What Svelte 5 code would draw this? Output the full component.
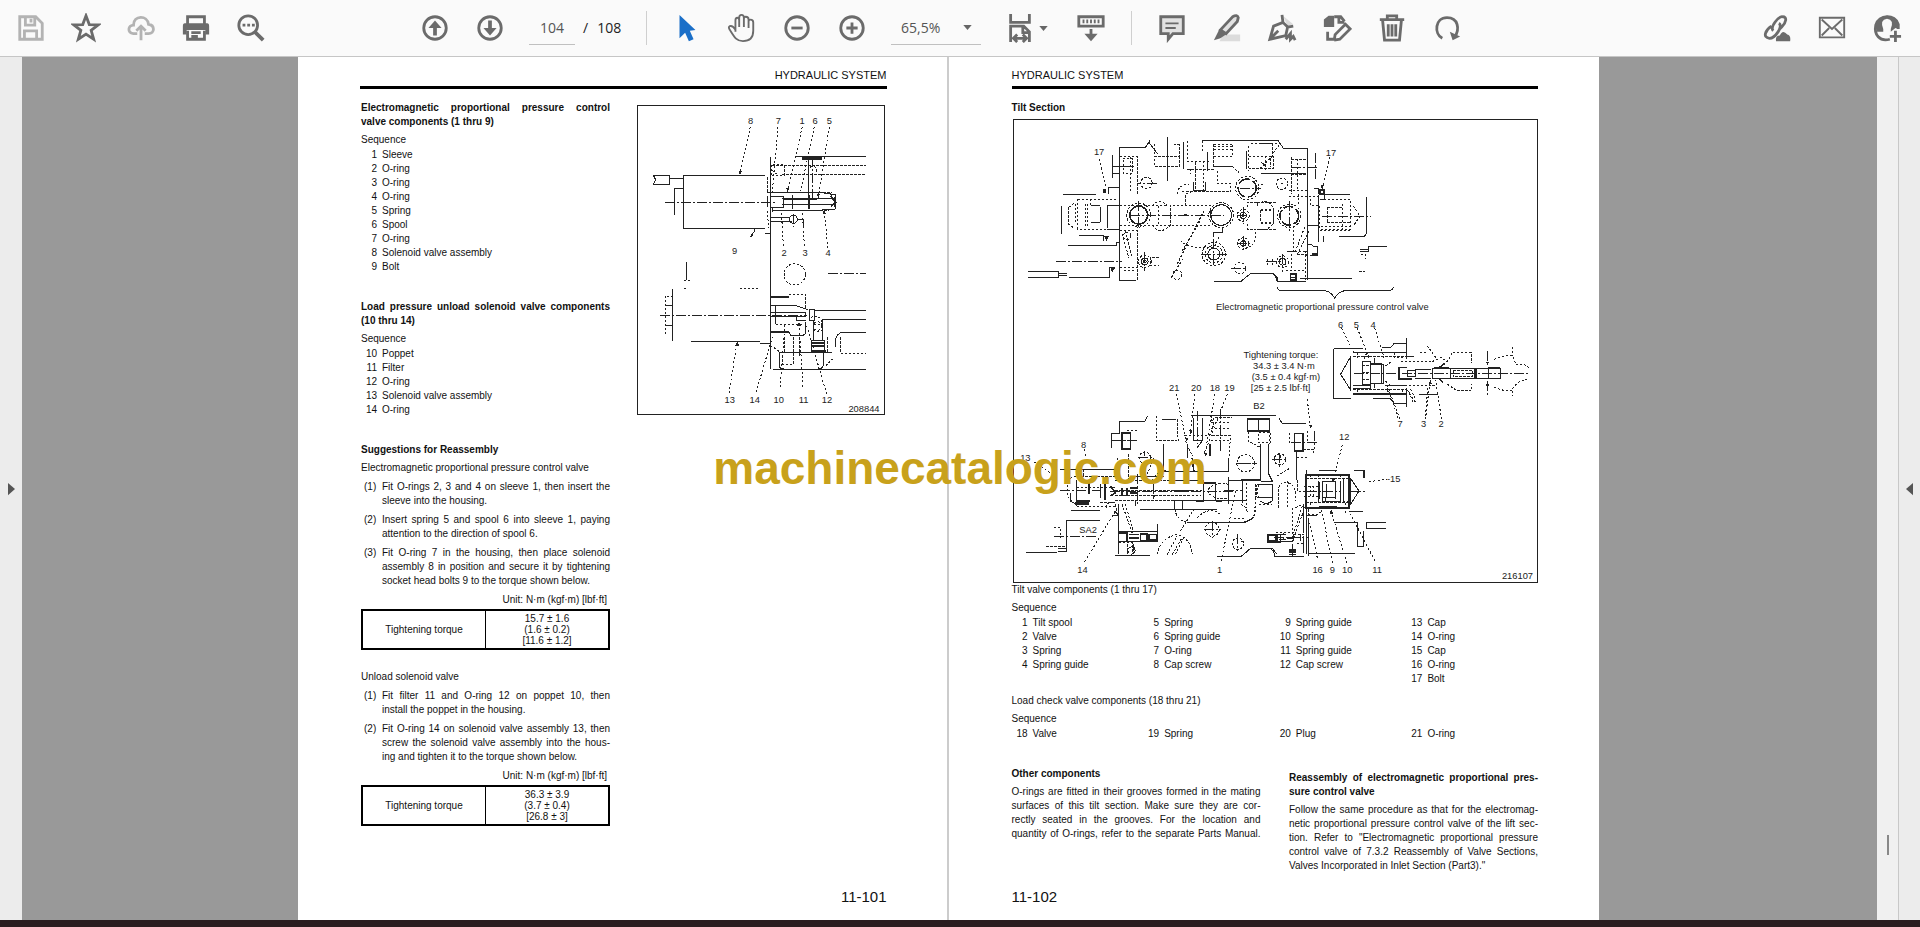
<script>
	let pageNumber = "104";
	let zoom = "65,5%";

	const leftParts = [
		{ no: 1, name: "Sleeve" },
		{ no: 2, name: "O-ring" },
		{ no: 3, name: "O-ring" },
		{ no: 4, name: "O-ring" },
		{ no: 5, name: "Spring" },
		{ no: 6, name: "Spool" },
		{ no: 7, name: "O-ring" },
		{ no: 8, name: "Solenoid valve assembly" },
		{ no: 9, name: "Bolt" },
	];

	const unloadParts = [
		{ no: 10, name: "Poppet" },
		{ no: 11, name: "Filter" },
		{ no: 12, name: "O-ring" },
		{ no: 13, name: "Solenoid valve assembly" },
		{ no: 14, name: "O-ring" },
	];

	const tiltParts = [
		[
			{ no: 1, name: "Tilt spool" },
			{ no: 2, name: "Valve" },
			{ no: 3, name: "Spring" },
			{ no: 4, name: "Spring guide" },
		],
		[
			{ no: 5, name: "Spring" },
			{ no: 6, name: "Spring guide" },
			{ no: 7, name: "O-ring" },
			{ no: 8, name: "Cap screw" },
		],
		[
			{ no: 9, name: "Spring guide" },
			{ no: 10, name: "Spring" },
			{ no: 11, name: "Spring guide" },
			{ no: 12, name: "Cap screw" },
		],
		[
			{ no: 13, name: "Cap" },
			{ no: 14, name: "O-ring" },
			{ no: 15, name: "Cap" },
			{ no: 16, name: "O-ring" },
			{ no: 17, name: "Bolt" },
		],
	];

	const checkParts = [
		[{ no: 18, name: "Valve" }],
		[{ no: 19, name: "Spring" }],
		[{ no: 20, name: "Plug" }],
		[{ no: 21, name: "O-ring" }],
	];

	const valveSteps = [
		["Fit O-rings 2, 3 and 4 on sleeve 1, then insert the", "sleeve into the housing."],
		["Insert spring 5 and spool 6 into sleeve 1, paying", "attention to the direction of spool 6."],
		[
			"Fit O-ring 7 in the housing, then place solenoid",
			"assembly 8 in position and secure it by tightening",
			"socket head bolts 9 to the torque shown below.",
		],
	];

	const unloadSteps = [
		["Fit filter 11 and O-ring 12 on poppet 10, then", "install the poppet in the housing."],
		[
			"Fit O-ring 14 on solenoid valve assembly 13, then",
			"screw the solenoid valve assembly into the hous-",
			"ing and tighten it to the torque shown below.",
		],
	];

	const otherText = [
		"O-rings are fitted in their grooves formed in the mating",
		"surfaces of this tilt section. Make sure they are cor-",
		"rectly seated in the grooves. For the location and",
		"quantity of O-rings, refer to the separate Parts Manual.",
	];

	const reassemblyText = [
		"Follow the same procedure as that for the electromag-",
		"netic proportional pressure control valve of the lift sec-",
		'tion. Refer to "Electromagnetic proportional pressure',
		"control valve of 7.3.2 Reassembly of Valve Sections,",
		'Valves Incorporated in Inlet Section (Part3)."',
	];
</script>

{#snippet parts(items)}
	<ul class="parts">
		{#each items as part}
			<li><span class="no">{part.no}</span>{part.name}</li>
		{/each}
	</ul>
{/snippet}

{#snippet lines(items)}
	{#each items as line}
		<span class="line">{line}</span>
	{/each}
{/snippet}

{#snippet steps(items)}
	<ul class="steps">
		{#each items as step, i}
			<li>
				<span class="step-no">({i + 1})</span>
				<div class="step-text">{@render lines(step)}</div>
			</li>
		{/each}
	</ul>
{/snippet}

{#snippet torque(values)}
	<p class="unit">Unit: N·m (kgf·m) [lbf·ft]</p>
	<table>
		<tbody>
			<tr>
				<th scope="row">Tightening torque</th>
				<td>{#each values as value}<span class="value">{value}</span>{/each}</td>
			</tr>
		</tbody>
	</table>
{/snippet}

<div class="viewer">
	<header class="toolbar">
		<div class="group">
			<button class="faded" aria-label="Save">
				<svg viewBox="0 0 32 32"><path d="M4 4H21L28 11V28H4Z" /><path d="M10 4V13H20V4M16 6V10M9 28V19H22V28" /></svg>
			</button>
			<button aria-label="Star">
				<svg viewBox="0 0 32 32"><path d="M16 3L19.500 12.300L29 12.600L21.500 18.500L24.200 28L16 22.500L7.800 28L10.500 18.500L3 12.600L12.500 12.300Z" /></svg>
			</button>
			<button class="faded" aria-label="Upload">
				<svg viewBox="0 0 32 32"><path d="M12 22H8C1 21 2 13 8 13C8 2 23 2 24 12C31 13 31 22 24 22H20M16 29V15M11 19L16 14L21 19" /></svg>
			</button>
			<button aria-label="Print">
				<svg viewBox="0 0 32 32">
					<path class="fill" d="M4 11H28Q30 11 30 14V23H26V18H6V23H2V14Q2 11 4 11Z" />
					<path d="M7 12V4H25V12M7 19V28H25V19M11 21H21M11 25H18" />
				</svg>
			</button>
			<button aria-label="Search">
				<svg viewBox="0 0 32 32"><circle cx="13" cy="13" r="10" /><path d="M20 20L29 29" stroke-width="4" /><path d="M7 13H10M12 13H15M17 13H20" /></svg>
			</button>
		</div>

		<div class="group middle">
			<button aria-label="Previous page">
				<svg viewBox="0 0 32 32"><circle cx="16" cy="16" r="12" /><path d="M16 24V12" stroke-width="4" /><path class="fill" d="M9 16L16 8L23 16Z" /></svg>
			</button>
			<button aria-label="Next page">
				<svg viewBox="0 0 32 32"><circle cx="16" cy="16" r="12" /><path d="M16 8V20" stroke-width="4" /><path class="fill" d="M9 16L16 24L23 16Z" /></svg>
			</button>
			<input class="page-input" aria-label="Page number" bind:value={pageNumber} />
			<span class="total"><span>/</span><span>108</span></span>
			<span class="divider"></span>
			<button aria-label="Select">
				<svg viewBox="0 0 32 32"><path class="blue" d="M8 2L25 18L19 19L23 28L18 30L14 21L8 27Z" /></svg>
			</button>
			<button aria-label="Hand">
				<svg viewBox="0 0 32 32"><path d="M9 20V8Q9 5 11 5Q13 5 13 8V15V5Q13 2 15.500 2Q18 2 18 5V15V6Q18 4 20 4Q23 4 23 7V16V9Q23 7 25 7Q28 7 28 10V19C28 27 23 30 17 30C10 30 8 26 3 18Q1 15 3 14Q6 13 9 18" stroke-width="2" /></svg>
			</button>
			<button aria-label="Zoom out">
				<svg viewBox="0 0 32 32"><circle cx="16" cy="16" r="12" /><path d="M10 16H22" /></svg>
			</button>
			<button aria-label="Zoom in">
				<svg viewBox="0 0 32 32"><circle cx="16" cy="16" r="12" /><path d="M10 16H22M16 10V22" /></svg>
			</button>
			<label class="zoom">
				<select aria-label="Zoom level" bind:value={zoom}>
					<option>65,5%</option>
					<option>100%</option>
				</select>
				<svg class="caret" viewBox="0 0 10 6"><path d="M0 0H10L5 6Z" /></svg>
			</label>
			<button class="fit" aria-label="Fit width">
				<svg viewBox="0 0 32 32"><path d="M6 1V10H26V1M6 31V14H20L26 20V31M19 14V21H26M9 27H23M13 23L9 27L13 31M19 23L23 27L19 31" /></svg>
				<svg class="caret" viewBox="0 0 10 6"><path d="M0 0H10L5 6Z" /></svg>
			</button>
			<button aria-label="Scroll mode">
				<svg viewBox="0 0 32 32"><path d="M3 4H29V14H3ZM16 17V27" /><path d="M7 9H25" stroke-width="4" stroke-dasharray="2 2" /><path class="fill" d="M9 22H23L16 30Z" /></svg>
			</button>
			<span class="divider close"></span>
			<button aria-label="Comment">
				<svg viewBox="0 0 32 32"><path class="pale" d="M4 4H28V22H17L12 28V22H4Z" /><path d="M9 11H23M9 16H20" stroke-width="2" /></svg>
			</button>
			<button aria-label="Highlight">
				<svg viewBox="0 0 32 32"><path class="shade" d="M12 23H30V30H8Z" /><path class="pale" d="M9 18L22 4Q27 1 28 5L27 9L15 22Z" /><path class="fill" d="M8 17L16 22L9 27L2 29Z" /></svg>
			</button>
			<button aria-label="Sign">
				<svg viewBox="0 0 32 32"><path class="shade" d="M17 3L28 12L22 14Z" /><path d="M17 10L22 15L20 24L3 28L7 14ZM4 27L12 19M16 2L17 10M22 15L28 14M20 28L25 22V28L28 25L30 29" /></svg>
			</button>
			<button aria-label="Stamp">
				<svg viewBox="0 0 32 32"><path class="fill" d="M2 7L7 3H13V15H2Z" /><path d="M13 4H20L24 9M18 4V10H24M6 20V28H13M13 29L14 23L25 12L30 17L19 28L13 29" /></svg>
			</button>
			<button aria-label="Delete">
				<svg viewBox="0 0 32 32"><path d="M3 7H29M11 6V3H21V6M6 8L8 29H24L26 8M12 12V25M16 12V25M20 12V25" /></svg>
			</button>
			<button aria-label="Rotate">
				<svg viewBox="0 0 32 32"><path d="M11 27C2 22 3 5 16 5C28 5 30 17 24 26" /><path class="fill" d="M19 20L22 29L30 25Z" /></svg>
			</button>
		</div>

		<div class="group right">
			<button aria-label="Share link">
				<svg viewBox="0 0 32 32"><path d="M12 19C8 15 18 3 22 4C27 4 26 10 21 15L18 18M18 11C23 14 14 27 8 27C0 26 4 18 10 14" /><path class="fill" d="M15 30Q14 24 19 24Q22 17 27 23Q31 24 30 30Z" /></svg>
			</button>
			<button aria-label="Send mail">
				<svg viewBox="0 0 32 32"><path d="M3 5H29V26H3ZM5 7L16 17L27 7M5 24L13 16M27 24L19 16" stroke-width="2" /></svg>
			</button>
			<button aria-label="Add user">
				<svg viewBox="0 0 32 32"><path d="M19 28C8 31 2 23 4 13C7 1 25 1 28 12V17" /><path class="fill" d="M5 20L12 20V17Q8 7 16 6Q24 7 20 17V20L25 16L28 17V10Q24 3 16 3Q5 4 4 15Z" /><path d="M25 19V31M19 25H31" /></svg>
			</button>
		</div>
	</header>

	<div class="work">
		<button class="pane" aria-label="Open navigation pane">
			<svg class="pane-arrow" viewBox="0 0 8 14"><path d="M0 0L8 7L0 14Z" /></svg>
		</button>

		<main>
			<div class="spread">
				<article class="page odd">
					<p class="running">HYDRAULIC SYSTEM</p>
					<div class="cols">
						<div class="col">
							<h2>
								<span class="line">Electromagnetic proportional pressure control</span>
								<span class="line">valve components (1 thru 9)</span>
							</h2>
							<p class="sequence">Sequence</p>
							{@render parts(leftParts)}

							<h2 class="next">
								<span class="line">Load pressure unload solenoid valve components</span>
								<span class="line">(10 thru 14)</span>
							</h2>
							<p class="sequence">Sequence</p>
							{@render parts(unloadParts)}

							<h2 class="next">Suggestions for Reassembly</h2>
							<p class="intro">Electromagnetic proportional pressure control valve</p>
							{@render steps(valveSteps)}
							{@render torque(["15.7 ± 1.6", "(1.6 ± 0.2)", "[11.6 ± 1.2]"])}

							<p class="unload">Unload solenoid valve</p>
							{@render steps(unloadSteps)}
							{@render torque(["36.3 ± 3.9", "(3.7 ± 0.4)", "[26.8 ± 3]"])}
						</div>

						<figure class="small">
							<svg class="drawing" viewBox="37 136 738 924" role="img" aria-label="Solenoid valves">
								<!-- housing and solenoids -->
								<path d="M433 288V926M417 343H172V503H417M83 343H131V371H83L90 358L83 343M131 352H172M172 382H146V464M512 287H722M548 287V404M386 503V512L374 528M418 517H433M181 603V658M140 685V842M195 842H402M403 847H433M118 733H140M118 794H140M566 748H722M590 775H722M590 775V838M563 780V838M442 925H722M460 875H620M460 875V915Q462 925 475 925M628 860V845Q632 815 655 814H722M592 875V915Q590 925 578 925" />
								<path d="M433 395H580L628 402V445L575 449H440M470 412H628M470 432H628M433 407H472V440H433ZM425 405V440M433 483H500M433 471H492M515 476H533V500M433 733H505L548 747M433 754H540V768H433M512 768V780H540M551 745H566V778H551ZM450 735V790M433 815H490L495 825H530L538 820V785M557 838H596V875H557Z" />
								<path class="thick" d="M528 291H590M528 294H590M475 414H575M475 431H575M500 404V444M550 404V444M578 395V410M628 408V440M557 846H596M560 856H594M557 870H600M435 709H490M435 813H490M615 405L630 425L615 438M440 440V455" />
								<path class="dash" d="M440 314H722M470 341H722M436 312V345H475V312ZM553 320Q570 310 572 330V338M424 350V395M440 330L460 345M424 450L430 503M175 682H182M175 658H200M342 682H402M118 820V706H140M490 700H540V745M450 790H530M503 830V910H470V880M520 830V890M645 830V877H722M475 830V875M565 790H588M433 858Q455 862 460 875M600 915L620 895M425 395H620M440 450H610M555 770Q588 760 590 790M563 808Q576 820 590 808M605 830V875" />
								<path class="center" d="M117 424H455M102 763H545M606 639H722M560 290V415M503 460V500" />
								<circle class="dash" cx="507" cy="641" r="32" /><circle cx="503" cy="476" r="12" /><circle class="dash" cx="576" cy="796" r="13" />
								<path class="lead" d="M374 198L343 340M457 198L440 395M530 198L485 392M566 198L525 390M611 198L578 408M473 555L467 450M536 555L530 450M607 562L595 450M310 998L334 845M391 995L440 830M463 980L478 785M532 978L520 790M603 1000L540 785" />
								<path class="arrow" d="M338 330H350L343 343ZM482 382H492L485 395ZM590 460H602L595 448ZM329 855H340L335 842ZM370 530L382 518V527ZM573 400H583L578 412ZM515 795H525L520 785Z" />
								<text x="375" y="189">8</text><text x="458" y="189">7</text><text x="529" y="189">1</text><text x="568" y="189">6</text><text x="611" y="189">5</text>
								<text x="327" y="580">9</text><text x="475" y="585">2</text><text x="538" y="585">3</text><text x="607" y="585">4</text>
								<text x="312" y="1026">13</text><text x="387" y="1026">14</text><text x="459" y="1026">10</text><text x="534" y="1026">11</text><text x="604" y="1026">12</text>
								<text x="715" y="1053">208844</text>
							</svg>
						</figure>
					</div>
					<p class="folio">11-101</p>
				</article>

				<article class="page even">
					<p class="running">HYDRAULIC SYSTEM</p>
					<h2>Tilt Section</h2>
					<figure>
						<svg class="drawing" viewBox="41 88 1569 1386" role="img" aria-label="Tilt section valves">
							<!-- upper valve, left half -->
							<path d="M358 170H435L448 150M358 170V568H408M445 155L472 190M500 138V245M550 155V235M605 149H835M620 185V240M335 193V262M335 227H400M335 247H358M188 310H288M325 310V290H358M320 343H358M320 415H358M182 345V430M235 433H308V450M202 463H348V455H358M82 541H175V559H82M175 547H200M175 553H200M205 559H328V530H345M640 571H722L750 548H815L830 560V571M737 180V235M780 247H835M578 275V300H615V275M640 440V425H665V408M320 345V412M300 348V395M272 345H300M272 395H300M783 215L797 228" />
							<path class="dash" d="M463 160V197H538V160M463 205V227H538V197M538 160H520M560 150V212H625M605 150V180M640 160H697V197H640ZM640 168H697M640 176H697M640 227H700M640 197V227H695L715 245M750 157H840L815 190M745 165V240M745 197H820V232H745M560 235H640M585 215V300H610V215M570 235V250M530 310Q532 282 565 280M650 240V278H690M545 303H690V280M555 345V315Q560 303 580 303M358 198H410V310M390 198V305M368 203H395V248H368ZM358 343H500M358 403H630M475 345V403M455 345Q475 320 500 345M455 403Q480 435 510 403V343H630M232 325H350M232 325V415H350M270 325V345M225 340V400M205 350V400L225 415M205 350L225 335M255 340V405M262 340V405M540 450Q560 470 600 470H640L655 440M545 480L600 390M570 440L610 360M530 520L560 460M512 560L550 500M358 420H410V568M375 420L395 500M365 430L385 500M358 530H410M370 540H405M475 500H450V525H475M740 350V335H770V350M740 400V415H765V440Q760 470 735 470M780 360H820V395H780ZM770 335H830M770 415H830" />
							<circle class="thick" cx="415" cy="373" r="27" /><circle class="dash" cx="415" cy="373" r="36" />
							<circle cx="662" cy="373" r="31" /><circle class="dash" cx="662" cy="373" r="37" />
							<circle class="thick" cx="740" cy="292" r="27" stroke-dasharray="40 8" /><circle class="dash" cx="740" cy="292" r="35" />
							<circle cx="728" cy="374" r="9" /><circle class="dash" cx="728" cy="374" r="18" /><circle cx="728" cy="458" r="8" /><circle class="dash" cx="728" cy="458" r="17" />
							<circle cx="640" cy="490" r="18" /><circle class="dash" cx="640" cy="490" r="26" /><circle class="dash" cx="640" cy="490" r="35" />
							<circle class="dash" cx="718" cy="532" r="17" /><circle class="dash" cx="438" cy="277" r="17" /><circle cx="433" cy="512" r="10" /><circle class="dash" cx="433" cy="512" r="19" /><circle cx="380" cy="435" r="11" class="dash" /><circle class="dash" cx="530" cy="552" r="14" />
							<circle cx="728" cy="374" r="3" /><circle cx="433" cy="512" r="4" />
							<path class="center" d="M168 511H365M390 373H670M415 330V415M470 277H410M640 445V525M600 490H680M692 532H735M728 350V400M708 374H748M708 458H748M728 435V478M433 485V540M500 245V270M630 352V395M797 512H840M718 292H782" />
							<path class="arrow" d="M308 295H318V308H308ZM310 436H325L318 450ZM330 530H345L335 545ZM550 369H560V377H550Z" />
							<path class="lead" d="M297 205L317 292" />
							<text x="296" y="194">17</text>

							<!-- upper valve, right half -->
							<g transform="translate(780 0)">
								<path d="M20 149H52L68 172H142V568M0 247H135M142 405H175V312M182 312H268M175 325V455M192 312V325H178M0 548H40L50 571H137M316 320V430L312 436H235M380 466H322V485M298 475H322M298 482H322M142 460H152L158 466H170V495M190 435V455M118 562H273M160 293H175V310M50 590Q52 600 70 600H195Q212 604 222 622Q232 604 250 600H380Q396 600 398 588" />
								<path class="dash" d="M0 157H35V197L0 232M15 195V240M0 197H30V230M92 200V310M110 205V300M92 205H135M92 250H135M85 300H142M85 318H175M115 310V345M178 325H275M178 345V415H270V325M200 350V395M245 340V415M200 350H245M200 395H270M278 345L298 377L278 405M180 408H275M178 418H270M0 335Q25 325 40 355V395Q25 420 0 415M0 355H40M0 397H40M100 405V490M132 410L105 480M145 420L110 490M110 490H140M92 490V540M135 480V568M20 505V522M35 505V522M0 280H10M75 540H135V560M300 492H315V505M296 541H312M150 325V345H175M155 495H135" />
								<path class="thick" d="M88 550H108M88 560H108M88 568H108M90 550V570M106 550V570M178 298H190V310H178Z" />
								<circle class="thick" cx="86" cy="375" r="28" stroke-dasharray="30 8" /><circle class="dash" cx="86" cy="375" r="35" /><circle class="dash" cx="64" cy="279" r="17" /><circle cx="66" cy="513" r="10" /><circle class="dash" cx="66" cy="513" r="18" />
								<path class="center" d="M86 330V420M183 376H330M92 230H175M166 188V270M66 490V545M20 513H60M78 482H140M60 279H68" />
								<path class="lead" d="M208 200L184 296" /><path class="arrow" d="M180 284H190L184 296ZM153 486H168V495H153Z" />
								<text x="211" y="195">17</text>

								<!-- enlarged cartridge -->
								<path d="M306 772H222L218 776V922H272M365 770H390L400 758H437M437 742V805M437 890V947M278 785H437M278 910H437M240 850L270 797M240 850L270 897V797M278 885H330V892H278M305 812H328V880H305M328 820H368V878H328V820M340 800V820M340 878V890M372 885H437M305 812V880M337 924H390L400 937H437M412 830H440M440 840H463V857H440ZM412 865H440M463 835H510M463 862H510M515 832H640V862H515ZM568 832V862M640 832H718V862H640M683 832V862M475 910H533M460 797H437" />
								<path class="thick" d="M278 785H437M278 909H437M362 822V876M414 830V865M330 820H365M332 878H340M645 832V862M682 832H718M520 832H565M415 830H432M415 865H455M535 830L552 818M535 863L548 875" />
								<path class="dash" d="M278 797H437M290 785V800M310 803Q318 775 328 803M400 785V800H430M278 897H437M292 897V908M380 897V908M425 897V908M305 825H328M305 845H328M305 865H328M375 825L395 810M375 870L390 885M420 812H515M420 885H515M440 897L465 935M450 895L465 925M445 905L460 940M500 765L525 800M478 785H500M515 812L540 800L560 812L575 785H632V815M560 880L590 900H632V878M700 805L735 795H755L765 820H790L805 830M700 890L735 900H750L770 875L805 862M755 768V795M755 900V915M515 885L530 880M578 838H635V857H578Z" />
								<path class="center" d="M280 847H808M680 780V820M680 870V915" />
								<path class="lead" d="M243 712L280 785M290 712L325 800M342 712L370 800M418 985L375 870M495 985L508 866M542 985L525 866" />
								<path class="arrow" d="M675 812H686L680 824ZM675 884H686L680 872ZM504 880H514L509 866Z" />
								<text x="240" y="710">6</text><text x="287" y="710">5</text><text x="337" y="710">4</text>
								<text x="418" y="1009">7</text><text x="489" y="1009">3</text><text x="541" y="1009">2</text>
							</g>
							<text x="965" y="657">Electromagnetic proportional pressure control valve</text>
							<text x="841" y="801">Tightening torque:</text>
							<text x="850" y="834">34.3 ± 3.4 N·m</text>
							<text x="856" y="867">(3.5 ± 0.4 kgf·m)</text>
							<text x="840" y="900">[25 ± 2.5 lbf·ft]</text>

							<!-- lower valve, left half -->
							<g transform="translate(0 750)">
								<path d="M357 243H432L442 225M357 243V278H332V320M365 275H390V325H365ZM485 235H527M570 223H827M490 310V392H685V350M580 230V300H607V230M605 300L590 320M178 385H350V375M210 455V480L230 492M212 508H298M197 632V538H298M197 622H172M197 630H172M78 634H170M312 418V478M353 490V640M353 572H470V600H353M470 550V600M345 642H450M400 405H490M512 478H685M405 495V478M420 505H648M523 480V505M547 480V505M610 418V480M645 430V478M685 408V488M725 430V485M685 418H780M685 478H737M742 233H808V270H742M780 310V418M805 310V400L815 420M775 430H815V470H775M560 543H735L760 530M650 646H722L750 622H815L830 640M665 480H645M512 418H610M800 580H840V605H800Z" />
								<path class="thick" d="M365 276H390V324H365ZM742 236H808M314 418V478M228 480H270M228 480V418M300 430V470M390 440H412M390 455H412M330 435L345 455L330 465M365 440V465M380 440V465M355 575H380V600M385 580H415M385 590H415M420 578H440V598H420ZM445 580H468V596H445ZM561 310V350M628 310V345M575 350L580 390M265 420V460M610 425H645V430M585 480H610M803 582H830V602H803Z" />
								<path class="dash" d="M468 225V300H530M530 235V275L535 300M552 285H625M555 300L575 345M640 250V230H695M635 285H690L685 350M627 223L640 250L625 290M630 245H690M630 300H685M630 262H690M743 272V300L780 320M808 270V300L805 310M385 340V418M350 350V390M200 420V465L230 495M200 420L220 405H350M230 495H350M250 385V405M345 418H610M345 448H610M345 462H600M345 478H610M230 440H350M300 485H345M318 500Q320 480 340 485M455 420Q480 370 520 400M460 350L440 400M365 490L395 575M375 490L398 570M345 490L350 520M523 505Q530 540 560 543M590 530Q630 490 665 525M760 525L765 485M737 425V500M470 640Q480 590 530 580Q570 590 575 640M500 640L530 585M515 640L545 590M525 640L550 590M540 570L580 505M385 620H405M380 610V640M400 610V640M355 605H395V640M685 430Q640 420 620 450Q640 480 685 470M775 430Q765 450 775 470M775 490H815M765 430V470M700 532H735M820 350Q840 330 840 350M380 270H410M400 300H355M160 560H180V590M138 615H195" />
								<circle class="dash" cx="433" cy="350" r="17" /><circle class="dash" cx="735" cy="367" r="26" /><circle class="dash" cx="635" cy="565" r="21" /><circle class="dash" cx="712" cy="608" r="17" /><circle class="dash" cx="393" cy="628" r="11" />
								<path class="center" d="M180 447H300M330 452H700M365 300H345M335 300H410M592 210V310M660 205V330M712 580V630M705 367H768M635 540V590M610 565H660M412 350H455M433 330V345M162 586H290M410 400V490M520 449H575M670 447H725M460 430V480" />
								<path class="lead" d="M527 160L558 300M583 160L570 275M643 160L615 330M680 160L610 340M252 325L258 350M100 362L165 405M253 662L345 510M662 660L705 450" />
								<path class="arrow" d="M566 268H576L571 280ZM553 290H563L559 302ZM336 522H350L344 508ZM610 335H622L616 347ZM455 462H464L459 475ZM338 515H352V525H338ZM225 483H265V492H225ZM548 447H556V453H548Z" />
								<text x="521" y="149">21</text><text x="587" y="149">20</text><text x="643" y="149">18</text><text x="687" y="149">19</text>
								<text x="250" y="322">8</text><text x="75" y="361">13</text><text x="263" y="577">SA2</text><text x="246" y="697">14</text><text x="657" y="697">1</text><text x="775" y="203">B2</text>
							</g>

							<!-- lower valve, right half -->
							<g transform="translate(720 870)">
								<path d="M0 103H105M125 127H195M115 112L125 127M22 112H88V152H22ZM55 115V150M162 158H188V210H162ZM168 210V298M60 190V295M85 210V280L95 300H60M50 310H95V350H50M60 360Q75 375 95 360V350M197 268V520M205 410V525M188 475V515M197 280H325V380H197M330 292V370L355 330L330 292M235 300V362M247 308V350H285V300H247M255 352V362H300V300M310 295V365M235 268H290M340 270H370V290M197 403H228M280 423H352V495H368V450M435 423H377V442H435M325 390H368M205 517H343M100 525H190M30 502H85Q100 505 102 525M0 295H60M188 370V455M247 300V362" />
								<path class="thick" d="M22 114H88M162 158H188V210H162ZM197 282H325V380H197ZM237 302V355M258 310V350M285 305V355M300 302V360M330 295V370M235 378H290M82 460H105V480H82ZM115 460H135M115 475H135M140 470H160M145 506H165M145 513H165M145 520H165M180 460V480" />
								<path class="dash" d="M55 155H90V185H55ZM148 155V185M200 150V180M188 205H220V215M168 230H200M170 298V330H235M190 315H235M190 345H235M197 292H325M197 365H325M210 280V292M235 280V292M300 280V292M210 315V345M220 315V345M247 360H325M210 365V380M315 365V380M113 380V330Q115 300 140 305Q165 310 165 340V360M140 300V380M110 285L150 260M165 380L180 372M195 375L155 480M185 375L160 455M205 385V400H230L245 390M105 455H160V480H110M160 460H190V488H165M155 380V500M120 480H150M45 350V390Q40 420 0 425M0 370Q18 375 20 395M50 310Q45 330 50 350M370 270V290M315 390V400M130 455V480M0 480H8" />
								<circle class="dash" cx="118" cy="235" r="17" /><circle class="dash" cx="15" cy="247" r="26" /><circle class="dash" cx="-8" cy="488" r="17" />
								<path class="center" d="M152 184H230M223 150V205M95 235H142M118 215V258M0 247H48M330 330H380M200 330H300M100 470H205M155 495V525M5 295V360" />
								<path class="lead" d="M200 55L210 140M305 192L277 300M385 302L438 295M230 530L207 425M275 545L240 375M318 545L270 385M403 540L330 400M472 110L440 20M553 105L562 20" />
								<path class="arrow" d="M205 132H215L211 145ZM268 398H278L271 384ZM273 292H284L277 305Z" />
								<text x="311" y="176">12</text><text x="459" y="304">-15</text><text x="231" y="577">16</text><text x="275" y="577">9</text><text x="320" y="577">10</text><text x="409" y="577">11</text>
								<text x="830" y="595">216107</text>
							</g>
						</svg>
					</figure>

					<p>Tilt valve components (1 thru 17)</p>
					<p class="sequence">Sequence</p>
					<div class="part-grid">
						{#each tiltParts as column}
							{@render parts(column)}
						{/each}
					</div>

					<p class="check">Load check valve components (18 thru 21)</p>
					<p class="sequence">Sequence</p>
					<div class="part-grid">
						{#each checkParts as column}
							{@render parts(column)}
						{/each}
					</div>

					<div class="notes">
						<section>
							<h2>Other components</h2>
							<p class="all">{@render lines(otherText)}</p>
						</section>
						<section class="lower">
							<h2>
								<span class="line">Reassembly of electromagnetic proportional pres-</span>
								<span class="line">sure control valve</span>
							</h2>
							<p>{@render lines(reassemblyText)}</p>
						</section>
					</div>
					<p class="folio">11-102</p>
				</article>
			</div>
			<p class="watermark">machinecatalogic.com</p>
		</main>

		<div class="scrollbar"><span class="thumb"></span></div>
		<button class="pane tools" aria-label="Open tools pane">
			<svg class="pane-arrow" viewBox="0 0 8 14"><path d="M8 0L0 7L8 14Z" /></svg>
		</button>
	</div>
	<footer></footer>
</div>

<style>
	:global(body) {
		margin: 0;
	}
	.viewer {
		display: flex;
		flex-direction: column;
		height: 100vh;
		overflow: hidden;
		color: #111;
		font-family: "Liberation Sans", Arial, sans-serif;
		font-size: 10px;
		line-height: 14px;
	}
	p,
	h2,
	ul,
	figure {
		margin: 0;
		padding: 0;
	}
	ul {
		list-style: none;
	}
	button {
		display: flex;
		align-items: center;
		justify-content: center;
		padding: 0;
		border: 0;
		background: none;
	}

	/* toolbar */
	.toolbar {
		display: flex;
		flex: none;
		height: 56px;
		border-bottom: 1px solid #c6c6c6;
		background: #fafafa;
		font-family: "Open Sans", "Noto Sans", sans-serif;
		font-size: 14px;
	}
	.group {
		display: flex;
		align-items: center;
		padding-left: 3px;
	}
	.group button {
		width: 55px;
		height: 54px;
	}
	.group button svg {
		width: 30px;
		height: 30px;
		fill: none;
		stroke: #6b6b6b;
		stroke-width: 3;
	}
	.group button.faded svg {
		stroke: #b3b3b3;
	}
	.group button .fill {
		fill: #6b6b6b;
		stroke: none;
	}
	.group button .pale {
		fill: #e2e2e2;
	}
	.group button .shade {
		fill: #dcdcdc;
		stroke: none;
	}
	.group button .blue {
		fill: #1b6fc8;
		stroke: none;
	}
	.middle {
		margin-left: 126px;
	}
	.right {
		margin-left: auto;
		padding-right: 6px;
	}
	.page-input {
		box-sizing: border-box;
		width: 46px;
		height: 34px;
		margin-left: 12px;
		padding: 0;
		border: 0;
		border-bottom: 1px solid #c0c0c0;
		background: none;
		color: #555;
		font: inherit;
		text-align: center;
	}
	.total {
		display: flex;
		gap: 9px;
		width: 63px;
		padding-left: 8px;
		color: #222;
	}
	.divider {
		width: 1px;
		height: 34px;
		margin-right: 12px;
		background: #cfcfcf;
	}
	.close {
		margin-left: 13px;
	}
	.zoom {
		display: flex;
		align-items: center;
		width: 90px;
		height: 33px;
		margin-left: 12px;
		border-bottom: 1px solid #c0c0c0;
	}
	.zoom select {
		flex: 1;
		height: 32px;
		padding: 0 10px;
		border: 0;
		background: none;
		color: #555;
		font: inherit;
		appearance: none;
	}
	.caret {
		flex: none;
		width: 9px;
		height: 5px;
		margin-right: 9px;
		fill: #666;
	}
	.group .fit {
		gap: 4px;
		width: 82px;
		padding-left: 9px;
	}
	.group .fit .caret {
		width: 9px;
		height: 5px;
		margin: 0;
		fill: #666;
		stroke: none;
	}

	/* document area */
	.work {
		display: flex;
		flex: 1;
		min-height: 0;
	}
	.pane {
		flex: none;
		width: 22px;
		background: #ececec;
	}
	.tools {
		box-sizing: border-box;
		border-left: 1px solid #c8c8c8;
	}
	.pane-arrow {
		width: 7px;
		height: 14px;
		fill: #555;
	}
	main {
		position: relative;
		display: flex;
		flex: 1;
		justify-content: center;
		overflow: hidden;
		background: #999;
	}
	.spread {
		display: flex;
		width: 1301px;
		margin-right: 2px;
		background: #fff;
	}
	.page {
		display: flex;
		flex: 1;
		flex-direction: column;
		box-sizing: border-box;
		min-width: 0;
	}
	.odd {
		padding: 0 60px 0 62px;
		border-right: 2px solid #ccc;
	}
	.even {
		padding: 0 61px 0 63px;
	}
	.running {
		padding: 11px 0 4px;
		border-bottom: 3px solid #000;
		margin-bottom: 12px;
		font-size: 11px;
	}
	.odd .running,
	.odd .folio {
		text-align: right;
	}
	h2 {
		font-size: 10px;
		line-height: 14px;
	}
	.cols {
		display: flex;
		align-items: flex-start;
		justify-content: space-between;
		padding: 0 2px 0 1px;
	}
	.col {
		width: 249px;
	}
	.small {
		width: 248px;
		margin-top: 4px;
	}
	.line,
	.value {
		display: block;
		white-space: nowrap;
	}
	.line:not(:last-child),
	.all .line {
		text-align-last: justify;
	}
	.sequence {
		margin: 4px 0 1px;
	}
	.next {
		margin-top: 26px;
	}
	.intro {
		margin: 4px 0 5px;
	}
	.parts li {
		display: flex;
		gap: 5px;
	}
	.no {
		width: 16px;
		text-align: right;
	}
	.steps li {
		display: flex;
		margin-bottom: 5px;
	}
	.step-no {
		flex: none;
		width: 18px;
		padding-left: 3px;
	}
	.step-text {
		flex: 1;
	}
	.unit {
		padding-right: 3px;
		text-align: right;
	}
	table {
		width: 100%;
		margin-top: 2px;
		border: 2px solid #000;
		border-collapse: collapse;
		table-layout: fixed;
		line-height: 11px;
	}
	th,
	td {
		padding: 2px 0;
		font-weight: normal;
		text-align: center;
	}
	td {
		border-left: 1px solid #000;
	}
	.unload {
		margin: 20px 0 5px;
	}
	.folio {
		margin: auto 0 14px;
		font-size: 15px;
		line-height: 18px;
	}
	.part-grid {
		display: grid;
		grid-template-columns: repeat(4, 1fr);
	}
	.check {
		margin-top: 8px;
	}
	.notes {
		display: grid;
		grid-template-columns: 249px 249px;
		justify-content: space-between;
		margin-top: 26px;
	}
	.notes p {
		margin-top: 4px;
	}
	.lower {
		margin-top: 4px;
	}

	/* drawings */
	figure {
		box-sizing: border-box;
		border: 1px solid #222;
	}
	.even figure {
		margin: 4px 0 0 1px;
	}
	.drawing {
		display: block;
		width: 100%;
		fill: none;
		stroke: #222;
		stroke-width: 3;
		shape-rendering: crispEdges;
	}
	.drawing .thick {
		stroke-width: 5;
	}
	.drawing .dash {
		stroke-dasharray: 7 5;
	}
	.drawing .center {
		stroke-dasharray: 30 6 6 6;
	}
	.drawing .lead {
		stroke-dasharray: 6 7;
	}
	.drawing .arrow {
		fill: #222;
		stroke: none;
	}
	.drawing text {
		fill: #222;
		stroke: none;
		font-size: 28px;
		text-anchor: middle;
	}

	/* the mark lies over both pages */
	.watermark {
		position: absolute;
		top: 384px;
		right: 0;
		left: 21px;
		color: #c8a11b;
		font-size: 46px;
		font-weight: bold;
		line-height: 54px;
		text-align: center;
		pointer-events: none;
	}
	.scrollbar {
		display: flex;
		flex: none;
		align-items: flex-end;
		justify-content: center;
		width: 21px;
		background: #f0f0f0;
	}
	.thumb {
		width: 2px;
		height: 20px;
		margin-bottom: 65px;
		background: #888;
	}
	footer {
		flex: none;
		height: 7px;
		background: #2b1d20;
	}
</style>
